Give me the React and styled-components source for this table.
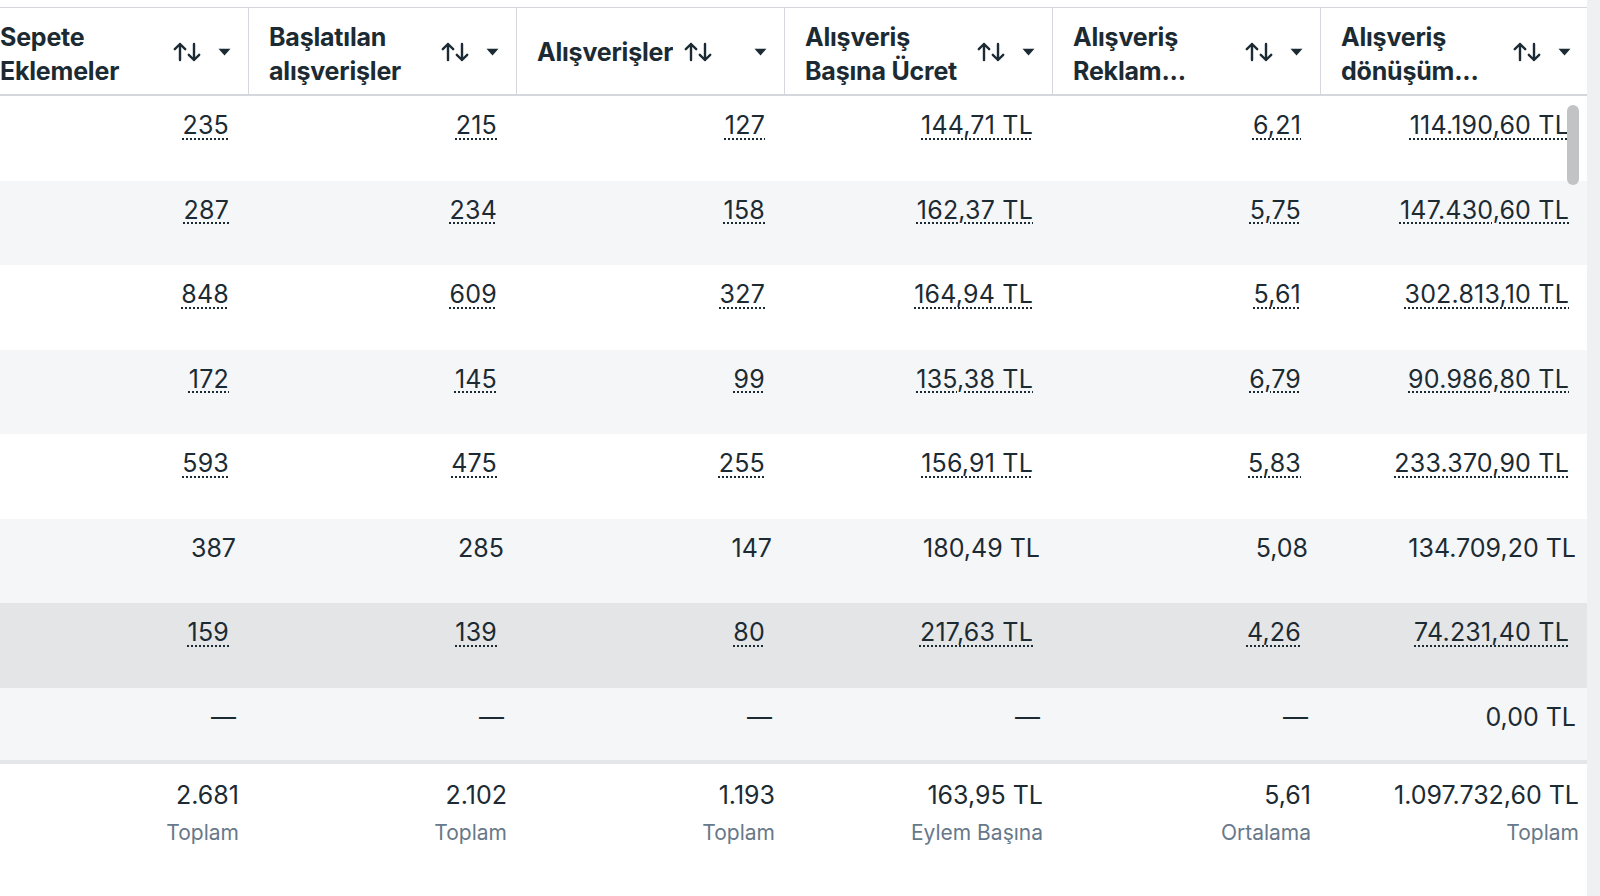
import styled, { createGlobalStyle } from "styled-components";

const GlobalStyle = createGlobalStyle`
  html, body {
    margin: 0;
    padding: 0;
    background: #eef0f2;
  }
  body {
    font-family: Inter, "Noto Sans", "DejaVu Sans", sans-serif;
    color: #1c2b33;
  }
`;

const Page = styled.div`
  display: flex;
  width: 1600px;
  height: 896px;
  overflow: hidden;
`;

const Frame = styled.div`
  flex: 0 0 1587px;
  display: flex;
  flex-direction: column;
  height: 100%;
  overflow: hidden;
  background: #ffffff;
  padding-top: 7px;
  box-sizing: border-box;
`;

const Grid = styled.div`
  display: grid;
  grid-template-columns: repeat(6, 268px);
  margin-left: -20px;
  width: 1608px;
`;

const HeaderRow = styled(Grid)`
  height: 89px;
  border-top: 1px solid #d4d8dc;
  border-bottom: 2px solid #d4d8dc;
  box-sizing: border-box;
`;

const HeaderCell = styled.div`
  display: flex;
  align-items: center;
  gap: 11px;
  padding: 1px 17px 0 20px;
  border-left: ${p => (p.$first ? "none" : "1px solid #d4d8dc")};
  min-width: 0;
`;

const Title = styled.div`
  flex: 0 1 auto;
  min-width: 0;
  margin-top: ${p => (p.$oneLine ? "1px" : "4px")};
  font-size: 25px;
  font-weight: 700;
  line-height: 34px;
  letter-spacing: -0.2px;
  display: -webkit-box;
  -webkit-line-clamp: 2;
  -webkit-box-orient: vertical;
  overflow: hidden;
`;

const CaretBox = styled.span`
  flex: 0 0 auto;
  display: flex;
  margin-left: auto;
  padding-left: 6px;
`;

const Body = styled.div`
  position: relative;
  height: 664px;
  overflow: hidden;
`;

const Row = styled(Grid)`
  height: 84.5px;
  background: ${p => (p.$hover ? "#e4e5e7" : p.$alt ? "#f5f6f8" : "#ffffff")};
`;

const Cell = styled.div`
  display: flex;
  justify-content: flex-end;
  align-items: flex-start;
  padding: 13px 12px 0 0;
  font-size: 25px;
  line-height: 32px;
`;

const Link = styled.span`
  margin-right: 7px;
  text-decoration: underline dotted #1c2b33;
  text-decoration-thickness: 2px;
  text-underline-offset: 4px;
  letter-spacing: 0.2px;
`;

const Thumb = styled.div`
  position: absolute;
  top: 9px;
  right: 8px;
  width: 12px;
  height: 80px;
  border-radius: 6px;
  background: #c2c3c5;
`;

const Divider = styled.div`
  height: 4px;
  background: #e4e6e9;
`;

const FooterRow = styled(Grid)`
  flex: 1;
`;

const FooterCell = styled.div`
  display: flex;
  flex-direction: column;
  align-items: flex-end;
  gap: 8px;
  padding: 15px 9px 0 0;
`;

const Total = styled.div`
  font-size: 25px;
  line-height: 32px;
`;

const TotalLabel = styled.div`
  font-size: 21px;
  line-height: 28px;
  color: #67788a;
`;

const columns = [
  { title: "Sepete Eklemeler", total: "2.681", label: "Toplam" },
  { title: "Başlatılan alışverişler", total: "2.102", label: "Toplam" },
  { title: "Alışverişler", oneLine: true, total: "1.193", label: "Toplam" },
  { title: "Alışveriş Başına Ücret", total: "163,95 TL", label: "Eylem Başına" },
  { title: "Alışveriş Reklam...", full: "Alışveriş Reklam Harcamasının Getirisi (ROAS)", total: "5,61", label: "Ortalama" },
  { title: "Alışveriş dönüşüm...", full: "Alışveriş dönüşüm değeri", total: "1.097.732,60 TL", label: "Toplam" },
];

const rows = [
  { values: ["235", "215", "127", "144,71 TL", "6,21", "114.190,60 TL"], link: true },
  { values: ["287", "234", "158", "162,37 TL", "5,75", "147.430,60 TL"], link: true },
  { values: ["848", "609", "327", "164,94 TL", "5,61", "302.813,10 TL"], link: true },
  { values: ["172", "145", "99", "135,38 TL", "6,79", "90.986,80 TL"], link: true },
  { values: ["593", "475", "255", "156,91 TL", "5,83", "233.370,90 TL"], link: true },
  { values: ["387", "285", "147", "180,49 TL", "5,08", "134.709,20 TL"], link: false },
  { values: ["159", "139", "80", "217,63 TL", "4,26", "74.231,40 TL"], link: true, hover: true },
  { values: ["—", "—", "—", "—", "—", "0,00 TL"], link: false },
];

function SortIcon() {
  return (
    <svg width="28" height="20" viewBox="0 0 28 20" fill="none" stroke="#1c2b33" strokeWidth="2.4" strokeLinecap="round" strokeLinejoin="round" style={{ flex: "0 0 auto" }}>
      <path d="M7 18V2M1.8 7.2L7 2l5.2 5.2" />
      <path d="M21 2v16M15.8 12.8L21 18l5.2-5.2" />
    </svg>
  );
}

function DropCaret() {
  return (
    <CaretBox>
      <svg width="13" height="8" viewBox="0 0 13 8">
        <path d="M0.5 0.8h12L6.5 7.4z" fill="#1c2b33" />
      </svg>
    </CaretBox>
  );
}

export default function App() {
  return (
    <Page>
      <GlobalStyle />
      <Frame>
        <HeaderRow>
          {columns.map((col, i) => (
            <HeaderCell key={col.title} $first={i === 0}>
              <Title $oneLine={col.oneLine} title={col.full || col.title}>{col.title}</Title>
              <SortIcon />
              <DropCaret />
            </HeaderCell>
          ))}
        </HeaderRow>
        <Body>
          {rows.map((row, r) => (
            <Row key={r} $alt={r % 2 === 1} $hover={row.hover}>
              {row.values.map((v, c) => (
                <Cell key={c}>{row.link ? <Link>{v}</Link> : v}</Cell>
              ))}
            </Row>
          ))}
          <Thumb />
        </Body>
        <Divider />
        <FooterRow>
          {columns.map(col => (
            <FooterCell key={col.title}>
              <Total>{col.total}</Total>
              <TotalLabel>{col.label}</TotalLabel>
            </FooterCell>
          ))}
        </FooterRow>
      </Frame>
    </Page>
  );
}
